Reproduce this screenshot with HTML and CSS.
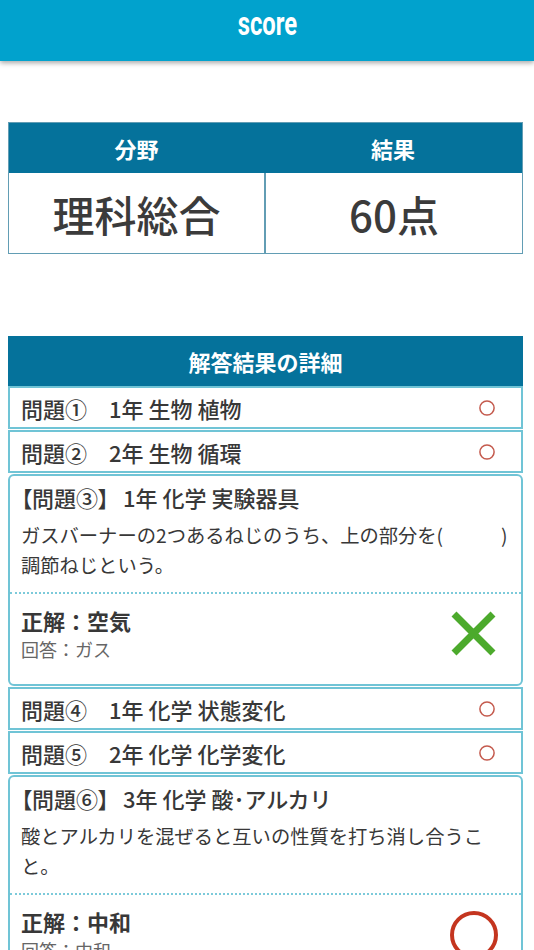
FILE: index.html
```html
<!DOCTYPE html>
<html lang="ja">
<head>
<meta charset="utf-8">
<title>score</title>
<link rel="stylesheet" href="styles.css">
</head>
<body>
<header class="appbar">
  <h1 class="appbar-title"><span class="appbar-word">score</span></h1>
</header>
<main class="content">
  <section class="summary">
    <div class="summary-head">分野</div>
    <div class="summary-head">結果</div>
    <div class="summary-cell">理科総合</div>
    <div class="summary-cell summary-cell-right">60点</div>
  </section>

  <section class="details">
    <h2 class="details-head">解答結果の詳細</h2>

    <div class="row">
      <span class="row-text">問題①　1年 生物 植物</span>
      <svg class="mark-small" viewBox="0 0 16 16" width="16" height="16"><circle cx="8" cy="8" r="7.1" fill="none" stroke="#c45a4d" stroke-width="1.5"/></svg>
    </div>
    <div class="row">
      <span class="row-text">問題②　2年 生物 循環</span>
      <svg class="mark-small" viewBox="0 0 16 16" width="16" height="16"><circle cx="8" cy="8" r="7.1" fill="none" stroke="#c45a4d" stroke-width="1.5"/></svg>
    </div>

    <div class="card">
      <div class="card-top">
        <p class="card-title"><span class="qno">【問題③】</span> 1年 化学 実験器具</p>
        <p class="card-q">ガスバーナーの2つあるねじのうち、上の部分を(　　　)<br>調節ねじという。</p>
      </div>
      <div class="card-bottom">
        <div class="card-answer">
          <p class="answer">正解：空気</p>
          <p class="response">回答：ガス</p>
        </div>
        <svg class="mark-big" viewBox="0 0 48 48" width="48" height="48"><path d="M4 4 L43 43 M43 4 L4 43" stroke="#4caa2c" stroke-width="7" fill="none"/></svg>
      </div>
    </div>

    <div class="row">
      <span class="row-text">問題④　1年 化学 状態変化</span>
      <svg class="mark-small" viewBox="0 0 16 16" width="16" height="16"><circle cx="8" cy="8" r="7.1" fill="none" stroke="#c45a4d" stroke-width="1.5"/></svg>
    </div>
    <div class="row">
      <span class="row-text">問題⑤　2年 化学 化学変化</span>
      <svg class="mark-small" viewBox="0 0 16 16" width="16" height="16"><circle cx="8" cy="8" r="7.1" fill="none" stroke="#c45a4d" stroke-width="1.5"/></svg>
    </div>

    <div class="card">
      <div class="card-top">
        <p class="card-title"><span class="qno">【問題⑥】</span> 3年 化学 酸･アルカリ</p>
        <p class="card-q">酸とアルカリを混ぜると互いの性質を打ち消し合うこ<br>と。</p>
      </div>
      <div class="card-bottom">
        <div class="card-answer">
          <p class="answer">正解：中和</p>
          <p class="response">回答：中和</p>
        </div>
        <svg class="mark-big" viewBox="0 0 48 48" width="48" height="48"><circle cx="24" cy="24" r="22" fill="none" stroke="#c4351f" stroke-width="4"/></svg>
      </div>
    </div>
  </section>
</main>
</body>
</html>
```

FILE: styles.css
```css
* {
  box-sizing: border-box;
}

html,
body {
  margin: 0;
  padding: 0;
}

body {
  width: 534px;
  background: #ffffff;
  color: #383838;
  font-family: "Noto Sans CJK JP", "Noto Sans", sans-serif;
}

.appbar {
  position: relative;
  z-index: 1;
  height: 61px;
  background: #01a2cd;
  box-shadow: 0 2px 5px rgba(0, 0, 0, 0.35);
  display: flex;
  justify-content: center;
}

.appbar-title {
  margin: 0;
  padding-top: 5px;
  font-family: Roboto, "Liberation Sans", sans-serif;
  font-weight: 700;
  font-size: 34px;
  line-height: 36px;
  color: #ffffff;
}

.appbar-word {
  display: inline-block;
  transform: scaleX(0.7);
  transform-origin: center;
}

.content {
  margin-left: 8px;
  width: 515px;
  padding: 61px 0 40px;
}

/* summary table */
.summary {
  display: grid;
  grid-template-columns: 255px 1fr;
  border: 1.5px solid #629db4;
}

.summary-head {
  height: 50px;
  background: #05729b;
  color: #ffffff;
  font-size: 22px;
  font-weight: 700;
  display: flex;
  align-items: center;
  justify-content: center;
}

.summary-cell {
  height: 80px;
  display: flex;
  align-items: center;
  justify-content: center;
  font-size: 42px;
  font-weight: 500;
  color: #3b3b3b;
}

.summary-cell-right {
  border-left: 2px solid #629db4;
}

/* details */
.details {
  margin-top: 82px;
}

.details-head {
  margin: 0;
  height: 50px;
  background: #05729b;
  color: #ffffff;
  font-size: 22px;
  font-weight: 700;
  display: flex;
  align-items: center;
  justify-content: center;
}

.row,
.card {
  border: 2px solid #70c4d6;
}

.row + .row,
.row + .card,
.card + .row {
  margin-top: 1px;
}

.row {
  height: 43px;
  display: flex;
  align-items: center;
  justify-content: space-between;
  padding: 0 26px 0 11px;
}

.row-text {
  font-size: 22px;
  font-weight: 500;
  line-height: 30px;
  color: #383838;
}

.mark-small {
  display: block;
  width: 16px;
  height: 16px;
}

.card {
  border-radius: 6px;
}

.card-top {
  padding: 6px 8px 12px 11px;
}

.card-title,
.card-q,
.answer,
.response {
  margin: 0;
}

.card-title {
  font-size: 22px;
  font-weight: 500;
  line-height: 30px;
  margin-bottom: 8px;
}

.qno {
  font-feature-settings: "palt";
  margin-right: 9px;
}

.card-q {
  font-size: 19.3px;
  line-height: 30px;
}

.card-bottom {
  border-top: 2px dotted #7ccada;
  display: flex;
  justify-content: space-between;
  align-items: flex-start;
  padding: 11px 23px 21px 11px;
}

.answer {
  font-size: 22px;
  font-weight: 700;
  line-height: 30px;
  color: #383838;
}

.response {
  font-size: 18px;
  line-height: 28px;
  color: #666666;
}

.mark-big {
  display: block;
  margin-top: 5px;
}
```
